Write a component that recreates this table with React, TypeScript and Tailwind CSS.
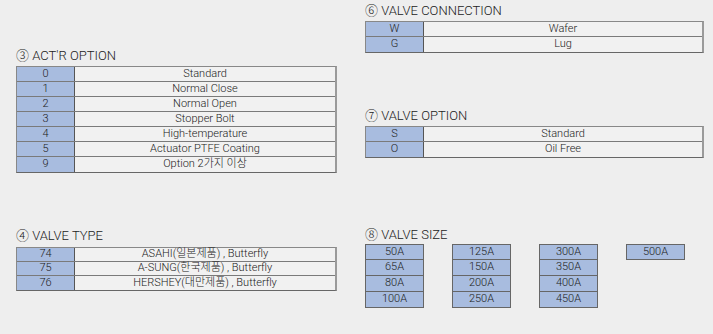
import React from "react";

const font = { fontFamily: "Roboto, 'Noto Sans CJK KR', sans-serif" };

type Row = [string, string];

function Title({ children }: { children: React.ReactNode }) {
  return (
    <div className="h-[16px] leading-[16px] text-[13px] font-light text-[#222]">{children}</div>
  );
}

function Table({ rows, rowH, width }: { rows: Row[]; rowH: string; width: string }) {
  return (
    <div className={`${width} border border-[#888] border-r-2 border-r-[#9a9a9a] border-b-[#666]`}>
      {rows.map(([k, v], i) => (
        <div
          key={i}
          className={`flex ${rowH} ${i < rows.length - 1 ? "border-b border-[#7a7a7a]" : ""}`}
        >
          <div className="w-[58px] shrink-0 bg-[#a8bcdf] border-r border-[#555] flex items-center justify-center text-[11px] font-light text-[#222]">
            {k}
          </div>
          <div className="flex-1 bg-[#f1f1f1] flex items-center justify-center text-[11px] font-light text-[#222]">
            {v}
          </div>
        </div>
      ))}
    </div>
  );
}

function SizeCol({ items }: { items: string[] }) {
  return (
    <div className="w-[59px] flex flex-col">
      {items.map((s, i) => (
        <div
          key={s}
          className={`h-[16px] bg-[#a8bcdf] border-x border-b border-[#666] ${i === 0 ? "border-t" : ""} flex items-center justify-center text-[11px] font-light text-[#222]`}
        >
          {s}
        </div>
      ))}
    </div>
  );
}

export default function App() {
  return (
    <div className="w-[713px] h-[334px] bg-[#eeeeee] flex pl-[16px]" style={font}>
      <div className="w-[321px] flex flex-col pt-[48px]">
        <Title>③ ACT'R OPTION</Title>
        <div className="mt-[2px]">
          <Table
            width="w-[321px]"
            rowH="h-[15px]"
            rows={[
              ["0", "Standard"],
              ["1", "Normal Close"],
              ["2", "Normal Open"],
              ["3", "Stopper Bolt"],
              ["4", "High-temperature"],
              ["5", "Actuator PTFE Coating"],
              ["9", "Option 2가지 이상"],
            ]}
          />
        </div>
        <div className="mt-[55px]">
          <Title>④ VALVE TYPE</Title>
        </div>
        <div className="mt-[3px]">
          <Table
            width="w-[321px]"
            rowH="h-[14px]"
            rows={[
              ["74", "ASAHI(일본제품) , Butterfly"],
              ["75", "A-SUNG(한국제품) , Butterfly"],
              ["76", "HERSHEY(대만제품) , Butterfly"],
            ]}
          />
        </div>
      </div>
      <div className="ml-[28px] w-[339px] flex flex-col pt-[3px]">
        <Title>⑥ VALVE CONNECTION</Title>
        <div className="mt-[2px]">
          <Table
            width="w-[339px]"
            rowH="h-[15px]"
            rows={[
              ["W", "Wafer"],
              ["G", "Lug"],
            ]}
          />
        </div>
        <div className="mt-[55px]">
          <Title>⑦ VALVE OPTION</Title>
        </div>
        <div className="mt-[2px]">
          <Table
            width="w-[339px]"
            rowH="h-[15px]"
            rows={[
              ["S", "Standard"],
              ["O", "Oil Free"],
            ]}
          />
        </div>
        <div className="mt-[69px]">
          <Title>⑧ VALVE SIZE</Title>
        </div>
        <div className="mt-[1px] flex gap-[28px]">
          <SizeCol items={["50A", "65A", "80A", "100A"]} />
          <SizeCol items={["125A", "150A", "200A", "250A"]} />
          <SizeCol items={["300A", "350A", "400A", "450A"]} />
          <SizeCol items={["500A"]} />
        </div>
      </div>
    </div>
  );
}
